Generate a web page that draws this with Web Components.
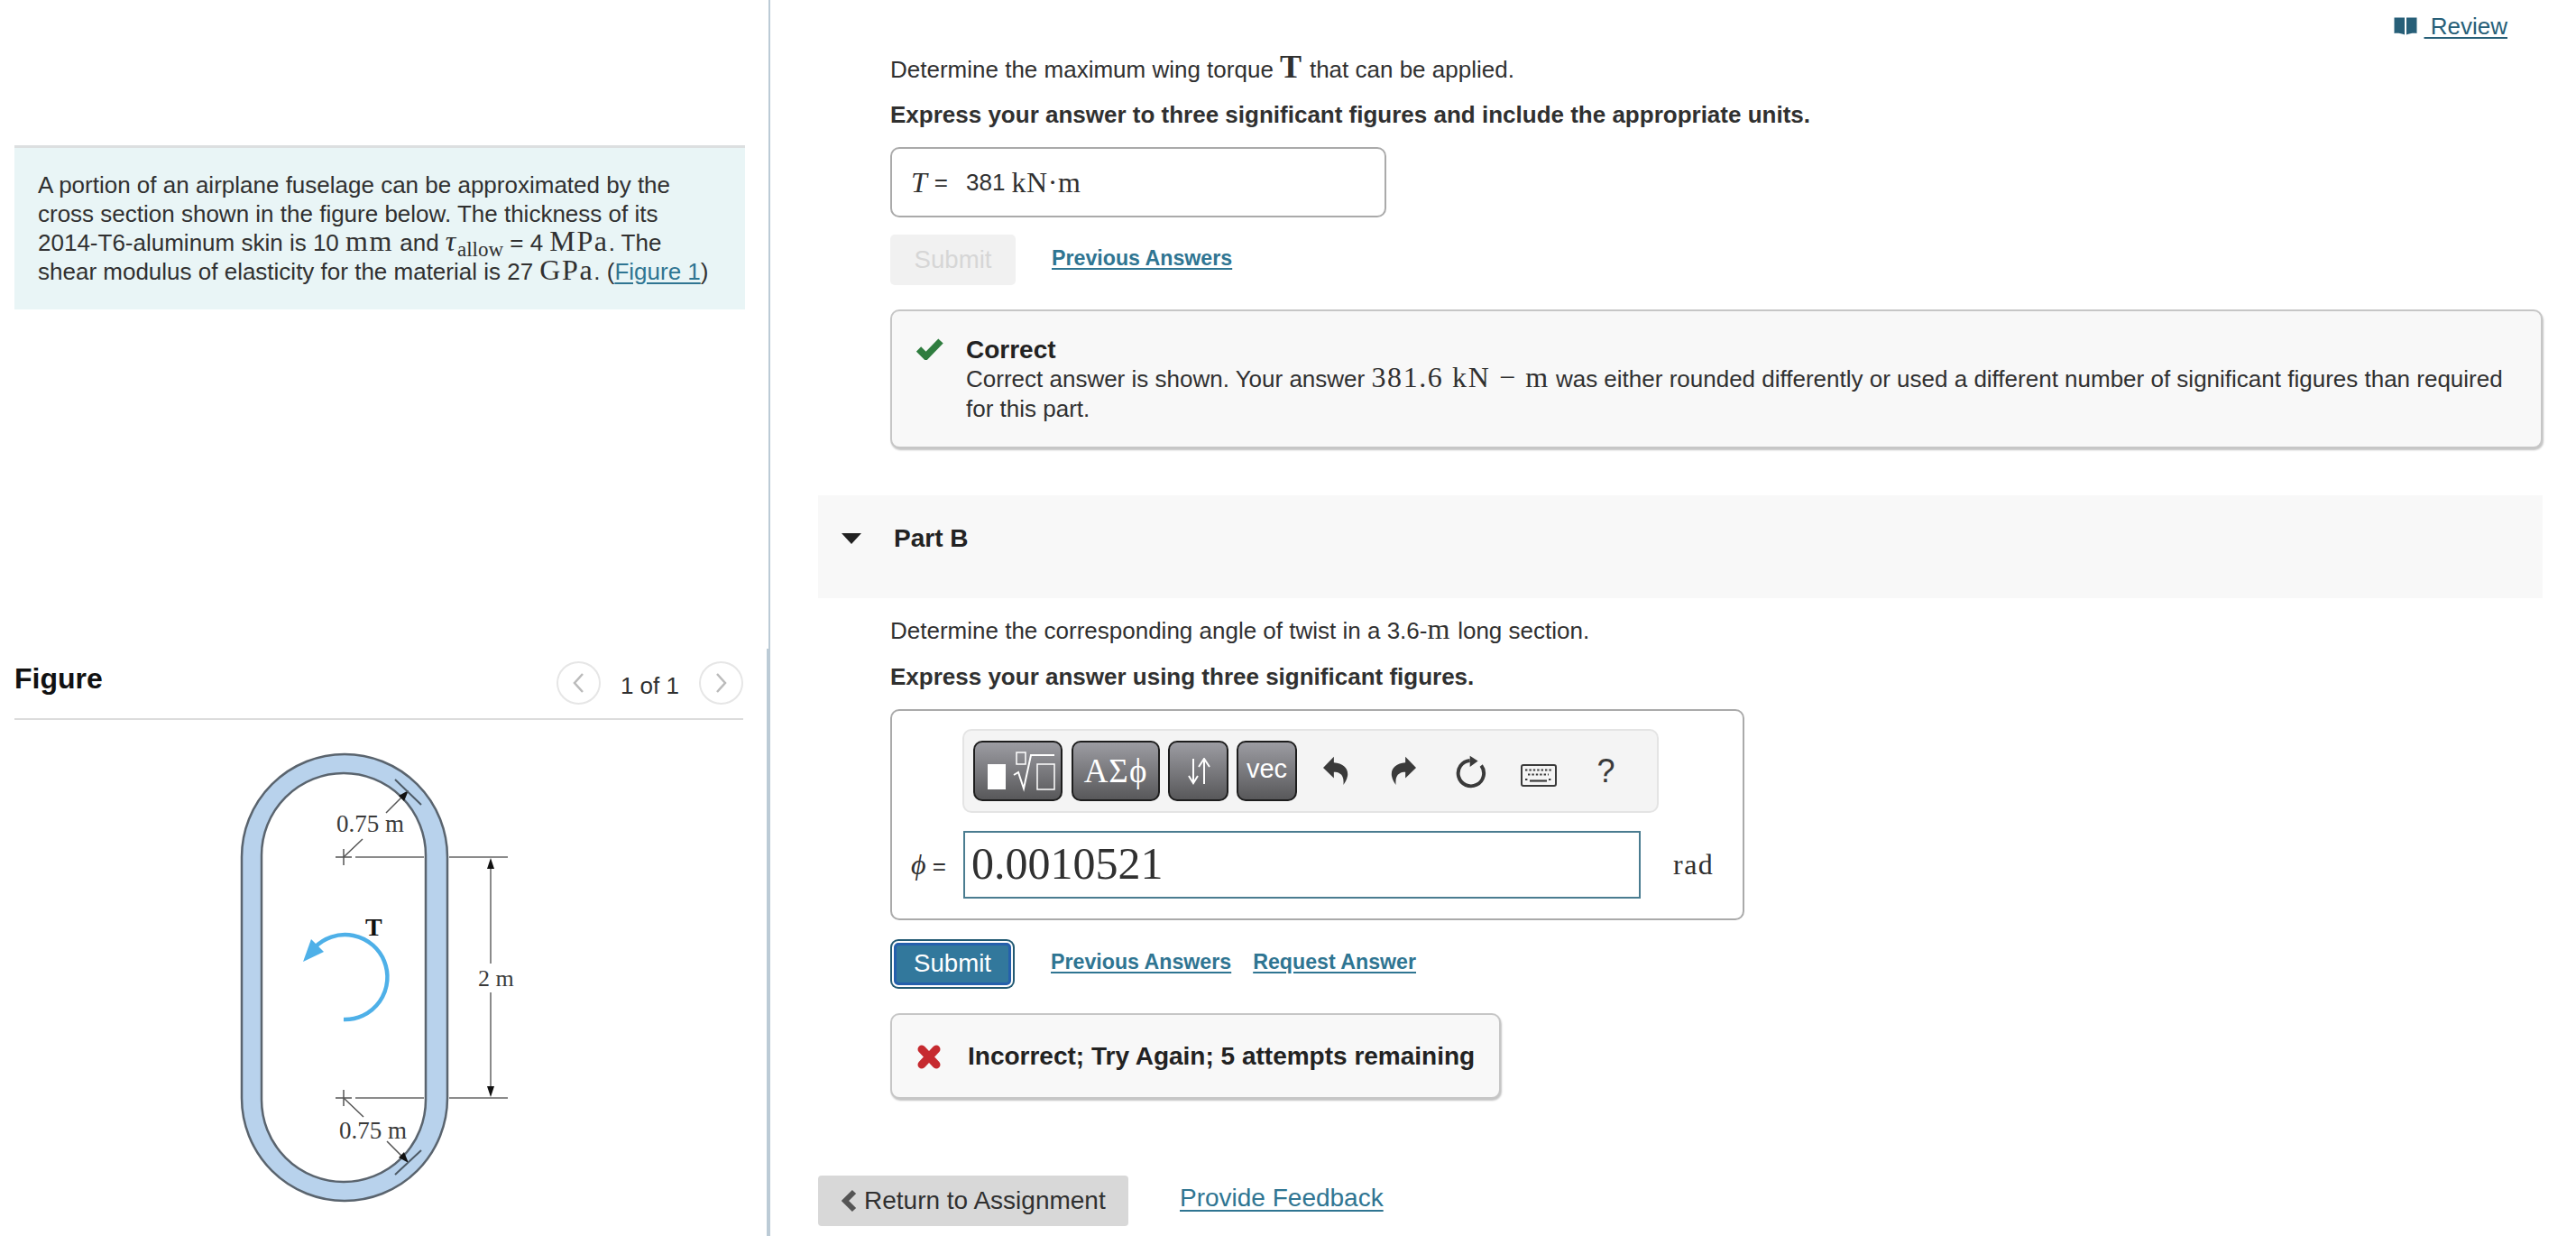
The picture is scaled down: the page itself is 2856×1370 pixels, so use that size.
<!DOCTYPE html>
<html lang="en">
<head>
<meta charset="utf-8">
<title>Part B</title>
<style>
  html, body {
    margin: 0;
    height: 1370px;
    overflow: hidden;
    background: #fff;
    color: #303030;
    font: 26px/32px "Liberation Sans", Arial, sans-serif;
  }
</style>
</head>
<body>
<split-page>
  <div slot="left">
    <info-panel>A portion of an airplane fuselage can be approximated by the cross section shown in the figure below. The thickness of its 2014-T6-aluminum skin is 10 <m-math>mm</m-math> and <m-math><i>τ</i><sub-text>allow</sub-text></m-math> = 4 <m-math>MPa</m-math>. The shear modulus of elasticity for the material is 27 <m-math>GPa</m-math>. (<m-link>Figure 1</m-link>)</info-panel>
    <figure-panel>
      <fuselage-figure></fuselage-figure>
    </figure-panel>
  </div>
  <review-link slot="right"></review-link>
  <part-section slot="right">
    <q-text>Determine the maximum wing torque <m-math><b style="font-size:36px">T</b></m-math> that can be applied.</q-text>
    <q-text gap="18" strong>Express your answer to three significant figures and include the appropriate units.</q-text>
    <answer-box></answer-box>
    <action-row gap="19" disabled>
      <m-link strong>Previous Answers</m-link>
    </action-row>
    <feedback-box kind="correct" gap="27">
      <strong-line>Correct</strong-line>
      Correct answer is shown. Your answer <m-math>381.6 kN − m</m-math> was either rounded differently or used a different number of significant figures than required for this part.
    </feedback-box>
  </part-section>
  <part-header slot="right">Part B</part-header>
  <part-section slot="right">
    <q-text gap="20">Determine the corresponding angle of twist in a 3.6-<m-math>m</m-math> long section.</q-text>
    <q-text gap="19" strong>Express your answer using three significant figures.</q-text>
    <math-answer></math-answer>
    <action-row gap="20">
      <m-link strong>Previous Answers</m-link>
      <m-link strong>Request Answer</m-link>
    </action-row>
    <feedback-box kind="wrong" gap="27"><strong-line>Incorrect; Try Again; 5 attempts remaining</strong-line></feedback-box>
  </part-section>
  <page-footer slot="right"></page-footer>
</split-page>

<script>
class SplitPage extends HTMLElement {
  constructor() {
    super();
    this.attachShadow({ mode: 'open' });
    this.shadowRoot.innerHTML = `
      <style>
        :host { display: flex; height: 1370px; overflow: hidden; }
        .left { width: 850px; flex: none; padding: 161px 0 0 16px; box-sizing: border-box; }
        .rule { width: 4px; flex: none; display: flex; flex-direction: column; align-items: flex-end; }
        .rule .top { width: 2px; height: 719px; background: #bccbd6; }
        .rule .bottom { width: 4px; flex: 1; background: #bccbd6; }
        .right { flex: 1; min-width: 0; padding: 13px 37px 0 53px; }
      </style>
      <div class="left"><slot name="left"></slot></div>
      <div class="rule"><div class="top"></div><div class="bottom"></div></div>
      <div class="right"><slot name="right"></slot></div>
    `;
  }
}

class InfoPanel extends HTMLElement {
  constructor() {
    super();
    this.attachShadow({ mode: 'open' });
    this.shadowRoot.innerHTML = `
      <style>
        :host {
          display: block;
          width: 810px;
          box-sizing: border-box;
          height: 182px;
          padding: 25px 40px 0 26px;
          background: #e9f5f6;
          border-top: 3px solid #dcdfe0;
        }
      </style>
      <slot></slot>
    `;
  }
}

class FigurePanel extends HTMLElement {
  constructor() {
    super();
    this.attachShadow({ mode: 'open' });
    this.shadowRoot.innerHTML = `
      <style>
        :host { display: block; width: 808px; margin-top: 383px; }
        header {
          display: flex;
          justify-content: space-between;
          height: 72px;
          box-sizing: border-box;
          border-bottom: 2px solid #dcdcdc;
        }
        h2 { margin: 0; font: bold 32px/52px "Liberation Sans", sans-serif; color: #111; }
        .pager { display: flex; gap: 22px; margin-top: 7px; height: 48px; align-items: center; }
        .pager span { position: relative; top: 3px; }
        button {
          width: 49px;
          height: 48px;
          padding: 0;
          border: 2px solid #e6e6e6;
          border-radius: 50%;
          background: #fff;
          display: flex;
          align-items: center;
          justify-content: center;
        }
        svg { fill: none; stroke: #bbb; stroke-width: 2.5; }
      </style>
      <header>
        <h2>Figure</h2>
        <div class="pager">
          <button><svg width="14" height="24" viewBox="0 0 14 24"><path d="M12 2 L3 12 L12 22"/></svg></button>
          <span>1 of 1</span>
          <button><svg width="14" height="24" viewBox="0 0 14 24"><path d="M2 2 L11 12 L2 22"/></svg></button>
        </div>
      </header>
      <slot></slot>
    `;
  }
}

class FuselageFigure extends HTMLElement {
  constructor() {
    super();
    this.attachShadow({ mode: 'open' });
    // viewBox uses page coordinates, easier to compare with the screenshot
    this.shadowRoot.innerHTML = `
      <style>
        :host { display: block; }
        svg { display: block; }
        text { font-family: "Liberation Serif", serif; fill: #3a3a3a; }
        .dim { stroke: #8b8b8b; stroke-width: 2; fill: none; }
        .thin { stroke: #555; stroke-width: 1.5; fill: none; }
      </style>
      <svg width="808" height="570" viewBox="16 800 808 570">
        <rect x="268" y="838" width="228" height="495" rx="114" fill="#b8d2ec" stroke="#5a646e" stroke-width="2.5"/>
        <rect x="290" y="859" width="182" height="453" rx="91" fill="#fff" stroke="#5a646e" stroke-width="2.5"/>

        <path class="dim" d="M394 952H470M498 952H563M394 1219H470M498 1219H563"/>
        <path class="thin" d="M372 952H390M381 943V961M372 1219H390M381 1210V1228"/>
        <path class="dim" d="M544 962V1070M544 1102V1208"/>
        <path fill="#111" d="M544 953L540 965H548ZM544 1218L540 1206H548Z"/>
        <text x="530" y="1095" font-size="26">2 m</text>

        <text x="373" y="924" font-size="27">0.75 m</text>
        <path class="thin" d="M381 952L402 932M428 903L449 882"/>
        <path fill="#111" d="M453 878L442 884L448 890Z"/>
        <path stroke="#4d5a66" stroke-width="2" d="M438 866L467 894"/>

        <text x="376" y="1264" font-size="27">0.75 m</text>
        <path class="thin" d="M381 1219L403 1240M429 1267L449 1287"/>
        <path fill="#111" d="M453 1291L442 1285L448 1279Z"/>
        <path stroke="#4d5a66" stroke-width="2" d="M438 1304L467 1277"/>

        <text x="405" y="1039" font-size="28" font-weight="bold" style="fill:#111">T</text>
        <path fill="none" stroke="#4eb0e8" stroke-width="4.5" d="M381 1132A47 47 0 1 0 349 1052"/>
        <path fill="#4eb0e8" d="M336 1068L345 1043L359 1057Z"/>
      </svg>
    `;
  }
}

// inline elements: no whitespace beside the slot, it would render as a space
class MMath extends HTMLElement {
  constructor() {
    super();
    this.attachShadow({ mode: 'open' });
    this.shadowRoot.innerHTML = `<style>
        :host {
          font-family: "Liberation Serif", serif;
          font-size: 32px;
          line-height: 0;
          letter-spacing: 0.05em;
        }
      </style><slot></slot>`;
  }
}

class SubText extends HTMLElement {
  constructor() {
    super();
    this.attachShadow({ mode: 'open' });
    this.shadowRoot.innerHTML = `<style>
        :host { font-size: 23px; position: relative; top: 6px; letter-spacing: 0; }
      </style><slot></slot>`;
  }
}

class MLink extends HTMLElement {
  constructor() {
    super();
    this.attachShadow({ mode: 'open' });
    this.shadowRoot.innerHTML = `<style>
        :host { color: #2f7592; text-decoration: underline; text-underline-offset: 3px; }
        :host([strong]) { font-weight: bold; font-size: 23.2px; }
      </style><slot></slot>`;
  }
}

class ReviewLink extends HTMLElement {
  constructor() {
    super();
    this.attachShadow({ mode: 'open' });
    this.shadowRoot.innerHTML = `
      <style>
        :host { display: flex; justify-content: flex-end; align-items: center; gap: 8px; padding-right: 39px; height: 32px; color: #275f78; }
        a { color: inherit; text-decoration: underline; text-underline-offset: 3px; white-space: pre; }
        svg { display: block; }
      </style>
      <svg width="26" height="20" viewBox="0 0 26 20" fill="currentColor"><path d="M0.5 0.5H12V19.5C8.5 18 4 17.5 0.5 18Z"/><path d="M14 0.5H25.5V18C22 17.5 17.5 18 14 19.5Z"/></svg>
      <a> Review</a>
    `;
  }
}

class PartSection extends HTMLElement {
  constructor() {
    super();
    this.attachShadow({ mode: 'open' });
    this.shadowRoot.innerHTML = `
      <style>
        :host { display: block; padding-left: 80px; }
      </style>
      <slot></slot>
    `;
  }
}

class QText extends HTMLElement {
  constructor() {
    super();
    this.attachShadow({ mode: 'open' });
    this.shadowRoot.innerHTML = `
      <style>
        :host { display: block; height: 32px; margin-top: 16px; white-space: nowrap; }
        :host([strong]) { font-weight: bold; }
      </style>
      <slot></slot>
    `;
    if (this.hasAttribute('gap')) this.style.marginTop = this.getAttribute('gap') + 'px';
  }
}

class AnswerBox extends HTMLElement {
  constructor() {
    super();
    this.attachShadow({ mode: 'open' });
    this.shadowRoot.innerHTML = `
      <style>
        :host {
          display: flex;
          align-items: center;
          width: 550px;
          height: 78px;
          margin-top: 20px;
          box-sizing: border-box;
          padding-left: 21px;
          border: 2px solid #aaa;
          border-radius: 10px;
        }
        .var { font: italic 32px/1 "Liberation Serif", serif; }
        .eq { margin: 0 20px 0 8px; }
        .unit { font: 32px/1 "Liberation Serif", serif; letter-spacing: 0.02em; margin-left: 7px; }
      </style>
      <span class="var">T</span><span class="eq">=</span><span>381</span><span class="unit">kN·m</span>
    `;
  }
}

class MButton extends HTMLElement {
  constructor() {
    super();
    this.attachShadow({ mode: 'open' });
    this.shadowRoot.innerHTML = `
      <style>
        :host {
          display: flex;
          align-items: center;
          justify-content: center;
          box-sizing: border-box;
          flex: none;
          width: 130px;
          height: 47px;
          margin: 4px;
          font-size: 27.6px;
          color: #fff;
          background: #32789c;
          border: 3px solid #2560ac;
          border-radius: 5px;
          box-shadow: 0 0 0 2px #fff, 0 0 0 4px #235a73;
        }
        :host([disabled]) {
          width: 139px;
          height: 56px;
          margin: 0;
          color: #d6d6d6;
          background: #f1f1f1;
          border: none;
          box-shadow: none;
        }
      </style>
      <slot></slot>
    `;
  }
}

class ActionRow extends HTMLElement {
  constructor() {
    super();
    this.attachShadow({ mode: 'open' });
    const disabled = this.hasAttribute('disabled') ? 'disabled' : '';
    this.shadowRoot.innerHTML = `
      <style>
        :host { display: flex; align-items: center; gap: 40px; height: 56px; margin-top: ${this.getAttribute('gap')}px; }
        .links { display: flex; gap: 24px; position: relative; top: -2px; }
      </style>
      <m-button ${disabled}>Submit</m-button>
      <div class="links"><slot></slot></div>
    `;
  }
}

class FeedbackBox extends HTMLElement {
  constructor() {
    super();
    this.attachShadow({ mode: 'open' });
    const correct = this.getAttribute('kind') === 'correct';
    const icon = correct
      ? `<svg width="30" height="24" viewBox="0 0 30 24"><path d="M2.5 12 L10.5 20 L27 3" fill="none" stroke="#2f7d3f" stroke-width="7.5"/></svg>`
      : `<svg width="28" height="27" viewBox="0 0 28 27"><path d="M6 5 L22 22 M22 5 L6 22" fill="none" stroke="#c62a2f" stroke-width="9" stroke-linecap="round"/></svg>`;
    this.shadowRoot.innerHTML = `
      <style>
        :host {
          display: block;
          position: relative;
          box-sizing: border-box;
          margin-top: ${this.getAttribute('gap')}px;
          line-height: 33px;
          background: #f8f8f8;
          border: 2px solid #c6c6c6;
          border-radius: 10px;
          box-shadow: 1px 2px 2px #c4c4c4;
        }
        :host([kind=correct]) { height: 154px; padding: 26px 40px 0 82px; }
        :host([kind=wrong]) { width: 677px; height: 95px; padding: 0 0 0 84px; display: flex; align-items: center; }
        svg { position: absolute; left: 27px; display: block; }
        :host([kind=correct]) svg { top: 30px; }
        :host([kind=wrong]) svg { top: 33px; }
      </style>
      ${icon}
      <div><slot></slot></div>
    `;
  }
}

class StrongLine extends HTMLElement {
  constructor() {
    super();
    this.attachShadow({ mode: 'open' });
    this.shadowRoot.innerHTML = `
      <style>
        :host { display: block; font-weight: bold; font-size: 28px; color: #222; }
      </style>
      <slot></slot>
    `;
  }
}

class PartHeader extends HTMLElement {
  constructor() {
    super();
    this.attachShadow({ mode: 'open' });
    this.shadowRoot.innerHTML = `
      <style>
        :host {
          display: flex;
          align-items: center;
          gap: 36px;
          box-sizing: border-box;
          height: 114px;
          margin-top: 52px;
          padding: 0 0 18px 26px;
          background: #f8f8f8;
          font-weight: bold;
          font-size: 28px;
          color: #222;
        }
        svg { display: block; }
      </style>
      <svg width="22" height="12" viewBox="0 0 22 12"><path d="M0 0H22L11 12Z" fill="#222"/></svg>
      <span><slot></slot></span>
    `;
  }
}

class MathToolbar extends HTMLElement {
  constructor() {
    super();
    this.attachShadow({ mode: 'open' });
    this.shadowRoot.innerHTML = `
      <style>
        :host {
          display: flex;
          box-sizing: border-box;
          width: 772px;
          height: 93px;
          padding: 11px 0 0 10px;
          margin: 20px 0 0 78px;
          background: #f4f4f4;
          border: 2px solid #e4e4e4;
          border-radius: 10px;
        }
        .btn {
          box-sizing: border-box;
          height: 67px;
          margin-right: 9px;
          display: flex;
          align-items: center;
          justify-content: center;
          color: #fff;
          background: linear-gradient(#9c9ca2, #58585a);
          border: 2px solid #1d1d1d;
          border-radius: 10px;
        }
        .greek { font: 37px "Liberation Serif", serif; letter-spacing: 1px; }
        .vec { font: 29px "Liberation Sans", sans-serif; position: relative; top: -2px; }
        .tool { width: 75px; height: 67px; display: flex; align-items: center; justify-content: center; color: #3a3a3a; }
        .help { font: 36px "Liberation Sans", sans-serif; }
        svg { display: block; }
      </style>
      <div class="btn" style="width:99px;margin-right:10px">
        <svg width="95" height="63" viewBox="1081 824 95 63" fill="none" stroke="#fff" stroke-width="1.5">
          <rect x="1095" y="848" width="20" height="28" fill="#fff" stroke="none"/>
          <rect x="1127" y="835" width="10" height="13"/>
          <path stroke-width="2" d="M1124 860L1129 857L1135 875L1143 838H1169"/>
          <rect x="1150" y="848" width="19" height="28"/>
        </svg>
      </div>
      <div class="btn greek" style="width:98px">ΑΣϕ</div>
      <div class="btn" style="width:67px">
        <svg width="28" height="30" viewBox="0 0 28 30" fill="none" stroke="#fff" stroke-width="2"><path d="M8 1V28M3 20L8 28L13 20"/><path d="M20 29V2M14 10L20 1L26 10"/></svg>
      </div>
      <div class="btn" style="width:67px"><span class="vec">vec</span></div>
      <div class="tool" style="margin-left:-4px">
        <svg width="28" height="33" viewBox="52 58 85 100" fill="currentColor"><path d="M52 97L88 60V80C120 82 138 100 134 125C132 138 125 148 120 155C122 135 118 122 108 117C102 113 96 112 88 112V132Z"/></svg>
      </div>
      <div class="tool">
        <svg width="28" height="33" viewBox="52 58 85 100" fill="currentColor" style="transform:scaleX(-1)"><path d="M52 97L88 60V80C120 82 138 100 134 125C132 138 125 148 120 155C122 135 118 122 108 117C102 113 96 112 88 112V132Z"/></svg>
      </div>
      <div class="tool">
        <svg width="35" height="38" viewBox="490 50 105 115"><path d="M578 88A43 43 0 1 1 540 71" fill="none" stroke="currentColor" stroke-width="12"/><path d="M540 55L567 73L540 92Z" fill="currentColor"/></svg>
      </div>
      <div class="tool" style="padding-top:10px;box-sizing:border-box">
        <svg width="40" height="25" viewBox="0 0 40 25">
          <rect x="1" y="1" width="38" height="23" rx="2" fill="#f4f4f4" stroke="currentColor" stroke-width="2"/>
          <path stroke="currentColor" stroke-width="2.2" stroke-dasharray="2.4 2" fill="none" d="M5 6.5H35M8 11.5H31M5 17H8M31 17H35"/>
          <path stroke="currentColor" stroke-width="2.2" fill="none" d="M10 18.5H29"/>
        </svg>
      </div>
      <div class="tool help">?</div>
    `;
  }
}

class MathAnswer extends HTMLElement {
  constructor() {
    super();
    this.attachShadow({ mode: 'open' });
    this.shadowRoot.innerHTML = `
      <style>
        :host {
          display: block;
          box-sizing: border-box;
          width: 947px;
          height: 234px;
          margin-top: 20px;
          border: 2px solid #aaa;
          border-radius: 10px;
        }
        .row { display: flex; align-items: center; margin-top: 20px; }
        .label { width: 79px; box-sizing: border-box; padding-left: 21px; white-space: nowrap; }
        .label i { font: italic 32px/1 "Liberation Serif", serif; }
        .input {
          box-sizing: border-box;
          width: 751px;
          height: 75px;
          padding-left: 7px;
          border: 2px solid #4a7c90;
          font: 50px/68px "Liberation Serif", serif;
        }
        .unit { margin-left: 36px; font: 32px "Liberation Serif", serif; letter-spacing: 1.5px; }
      </style>
      <math-toolbar></math-toolbar>
      <div class="row">
        <div class="label"><i>ϕ</i> =</div>
        <div class="input">0.0010521</div>
        <div class="unit">rad</div>
      </div>
    `;
  }
}

class PageFooter extends HTMLElement {
  constructor() {
    super();
    this.attachShadow({ mode: 'open' });
    this.shadowRoot.innerHTML = `
      <style>
        :host { display: flex; align-items: center; gap: 57px; margin-top: 85px; font-size: 28px; }
        .back {
          display: flex;
          align-items: center;
          gap: 8px;
          box-sizing: border-box;
          width: 344px;
          height: 56px;
          padding-left: 26px;
          background: #d8d8d8;
          border-radius: 4px;
        }
        svg { display: block; }
        a { color: #2f7592; text-decoration: underline; text-underline-offset: 4px; position: relative; top: -3px; }
      </style>
      <div class="back">
        <svg width="17" height="26" viewBox="0 0 17 26"><path d="M14 3L4 13L14 23" fill="none" stroke="#555" stroke-width="6"/></svg>
        <span>Return to Assignment</span>
      </div>
      <a>Provide Feedback</a>
    `;
  }
}

customElements.define('split-page', SplitPage);
customElements.define('info-panel', InfoPanel);
customElements.define('figure-panel', FigurePanel);
customElements.define('fuselage-figure', FuselageFigure);
customElements.define('m-math', MMath);
customElements.define('sub-text', SubText);
customElements.define('m-link', MLink);
customElements.define('review-link', ReviewLink);
customElements.define('part-section', PartSection);
customElements.define('q-text', QText);
customElements.define('answer-box', AnswerBox);
customElements.define('m-button', MButton);
customElements.define('action-row', ActionRow);
customElements.define('feedback-box', FeedbackBox);
customElements.define('strong-line', StrongLine);
customElements.define('part-header', PartHeader);
customElements.define('math-toolbar', MathToolbar);
customElements.define('math-answer', MathAnswer);
customElements.define('page-footer', PageFooter);
</script>
</body>
</html>
